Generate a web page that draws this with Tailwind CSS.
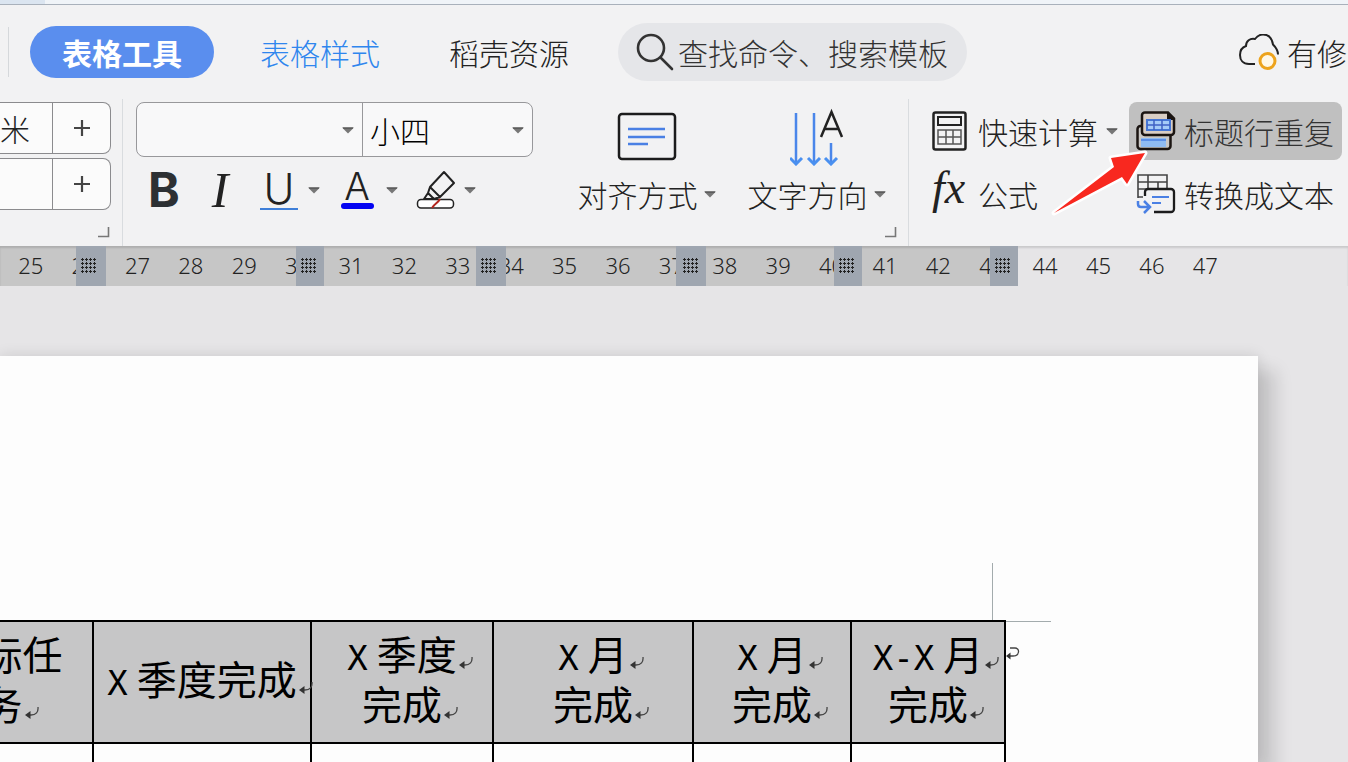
<!DOCTYPE html>
<html lang="zh-CN">
<head>
<meta charset="utf-8">
<title>表格工具</title>
<script src="https://cdn.jsdelivr.net/npm/@tailwindcss/browser@4"></script>
</head>
<body class="flex h-screen flex-col overflow-hidden bg-[#e6e5e7] font-['Noto_Sans_CJK_SC',sans-serif] font-light text-[#222]">
<svg class="hidden">
  <symbol id="caret" viewBox="0 0 12 7"><path d="M0 .5h12L6 6.5z" fill="#777"/><path d="M1 1h10" stroke="#444"/></symbol>
  <symbol id="corner" viewBox="0 0 12 12"><path d="M10.500 1v9.500H0" fill="none" stroke="#777" stroke-width="1.600"/></symbol>
  <symbol id="ret" viewBox="0 0 14 14"><path d="M13 1c.5 5-2 8-7 8H2" fill="none" stroke="#444" stroke-width="1.300"/><path d="M0 9l5.500-4v8z" fill="#333"/></symbol>
  <symbol id="dots" viewBox="0 0 16 16"><path d="M0 1.500h16M0 5.500h16M0 9.500h16M0 13.500h16" stroke="#222" stroke-width="1" stroke-dasharray="3 1"/><path d="M1.500 0v15M5.500 0v15M9.500 0v15M13.500 0v15" stroke="#222" stroke-width="1" stroke-dasharray="3 1"/></symbol>
</svg>

<div class="h-[5px] shrink-0 border-b border-[#a9b1bb] bg-[#f0f4f8]"><div class="h-full w-[45px] bg-[#dbe5f0]"></div></div>

<nav class="flex h-[94px] shrink-0 items-center bg-[#f2f2f3] text-[30px] leading-none whitespace-nowrap">
  <span class="mr-[21px] ml-2 h-[50px] w-px shrink-0 bg-[#d5d8db]"></span>
  <button class="h-[52px] w-[184px] shrink-0 rounded-full bg-[#5a8eee] font-bold text-white">表格工具</button>
  <button class="ml-[46px] shrink-0 text-[#2f86ee]">表格样式</button>
  <button class="ml-[69px] shrink-0 text-[#222]">稻壳资源</button>
  <label class="ml-[49px] flex h-[58px] w-[349px] shrink-0 items-center rounded-full bg-[#e5e6e9] pl-[18px]">
    <svg class="h-10 w-10 shrink-0" viewBox="0 0 40 40" fill="none" stroke="#333" stroke-width="2.600" stroke-linecap="round"><circle cx="15" cy="16" r="13"/><path d="M25 26l11 11"/></svg>
    <input type="text" aria-label="搜索" placeholder="查找命令、搜索模板" class="ml-0.5 w-[276px] bg-transparent outline-none placeholder:text-[#333] placeholder:opacity-100">
  </label>
  <button class="-mr-[29px] ml-auto flex shrink-0 items-center gap-2">
    <svg class="h-9 w-10" viewBox="0 0 40 36" fill="none"><path d="M16 30H10C4 30 1 26 1 21c0-5 3-8 6-9 0-5 4-8 9-7 3-4 6-4.500 8-4.500 6 0 9 4 10 10 3 3 5 6 5 10" stroke="#222" stroke-width="2"/><circle cx="28.500" cy="27" r="7.500" fill="#fff7e6" stroke="#eda31c" stroke-width="3"/></svg>
    <span>有修改</span>
  </button>
</nav>

<div class="flex h-[147px] shrink-0 bg-[#f2f2f3] text-[30px] leading-none whitespace-nowrap">
  <section class="relative flex w-[123px] shrink-0 flex-col gap-1 border-r border-[#d9dcdf] pt-[3px]">
    <div class="flex h-[52px] w-[111px] rounded-r-lg border border-l-0 border-[#8b8b8e] bg-[#fbfbfb]">
      <input aria-label="高度" value="米" class="w-[52px] min-w-0 outline-none">
      <button aria-label="增加高度" class="flex flex-1 items-center justify-center border-l border-[#8b8b8e]"><svg class="h-4 w-4" viewBox="0 0 16 16"><path d="M8 0v16M0 8h16" stroke="#444" stroke-width="2.200"/></svg></button>
    </div>
    <div class="flex h-[52px] w-[111px] rounded-r-lg border border-l-0 border-[#8b8b8e] bg-[#fbfbfb]">
      <input aria-label="宽度" class="w-[52px] min-w-0 outline-none">
      <button aria-label="增加宽度" class="flex flex-1 items-center justify-center border-l border-[#8b8b8e]"><svg class="h-4 w-4" viewBox="0 0 16 16"><path d="M8 0v16M0 8h16" stroke="#444" stroke-width="2.200"/></svg></button>
    </div>
    <svg class="absolute right-3 bottom-2 h-3 w-3"><use href="#corner"/></svg>
  </section>

  <section class="relative flex w-[786px] shrink-0 border-r border-[#d9dcdf] pt-[3px] pl-[13px]">
    <div class="w-[397px] shrink-0">
      <div class="flex h-[55px] rounded-lg border border-[#98989b] bg-[#f8f8f9]">
        <div class="relative w-[226px] border-r border-[#98989b]">
          <select aria-label="字体" class="h-full w-full appearance-none rounded-l-lg pl-2"><option></option></select>
          <svg class="pointer-events-none absolute top-6 right-2 h-[7px] w-3"><use href="#caret"/></svg>
        </div>
        <div class="relative flex-1">
          <select aria-label="字号" class="h-full w-full appearance-none rounded-r-lg pl-[7px] leading-[40px] text-black"><option>小四</option></select>
          <svg class="pointer-events-none absolute top-6 right-2 h-[7px] w-3"><use href="#caret"/></svg>
        </div>
      </div>
      <div class="flex h-[66px] items-center pl-3">
        <button aria-label="加粗" class="w-8 font-[Inter] text-[48px] leading-[52px] font-bold text-[#2d3033]">B</button>
        <button aria-label="倾斜" class="ml-[26px] w-7 font-['Liberation_Serif'] text-[50px] leading-[52px] font-normal text-[#222] italic">I</button>
        <button aria-label="下划线" class="ml-[26px] flex w-[38px] flex-col items-center border-b-2 border-[#3f7fd8] font-[Inter] text-[42px] leading-[38px] font-light">U</button>
        <svg class="ml-2.5 h-[7px] w-3"><use href="#caret"/></svg>
        <button aria-label="字体颜色" class="ml-5 flex w-[34px] flex-col items-center font-[Inter] text-[38px] leading-[31px] font-light">A<span class="mt-px h-1.5 w-[33px] rounded-full bg-[#0303f2]"></span></button>
        <svg class="ml-3 h-[7px] w-3"><use href="#caret"/></svg>
        <button aria-label="突出显示" class="ml-[18px]"><svg class="h-10 w-10" viewBox="0 0 40 40" fill="none" stroke="#222" stroke-width="2" stroke-linejoin="round"><path d="M28 2l10 11-14 14-10-10zM14 17l-2 6 6 6 6-2M12 23l-4 6h8l2-1"/><rect x="1.500" y="29.500" width="36" height="8.500" rx="3.500" fill="#fff" stroke-width="1.500"/><path d="M24 29c-2 4-6 5-8 9" stroke="#b3261e"/></svg></button>
        <svg class="ml-2 h-[7px] w-3"><use href="#caret"/></svg>
      </div>
    </div>
    <button class="ml-[44px] flex w-[139px] shrink-0 flex-col items-center pt-[10px]">
      <svg class="h-[50px] w-[60px]" viewBox="0 0 60 50" fill="none"><rect x="2" y="2" width="56" height="45" rx="3" stroke="#1c1c1c" stroke-width="2.500"/><path d="M11 17h37M11 25h37M11 32h20" stroke="#4a80e4" stroke-width="2.500"/></svg>
      <span class="mt-[17px] flex items-center gap-[6px]">对齐方式<svg class="h-[7px] w-3"><use href="#caret"/></svg></span>
    </button>
    <button class="ml-[31px] flex w-[139px] shrink-0 flex-col items-center pt-[6px]">
      <svg class="h-[58px] w-[54px]" viewBox="0 0 54 58" fill="none"><path d="M6 5v50M24 5v50M41 35v20" stroke="#4a86ea" stroke-width="2.500"/><path d="M0 50l6 6 6-6M18 50l6 6 6-6M35 50l6 6 6-6" stroke="#4a90f0" stroke-width="3"/><path d="M31 29L41.500 4 52 29M34 21h15" stroke="#222" stroke-width="2.500"/></svg>
      <span class="mt-[13px] flex items-center gap-[6px]">文字方向<svg class="h-[7px] w-3"><use href="#caret"/></svg></span>
    </button>
    <svg class="absolute right-[11px] bottom-2 h-3 w-3"><use href="#corner"/></svg>
  </section>

  <section class="relative flex min-w-[439px] flex-1 pt-[3px]">
    <div class="flex w-[220px] shrink-0 flex-col gap-1 pl-[23px]">
      <button class="flex h-[58px] items-center"><svg class="h-10 w-9" viewBox="0 0 36 40" fill="none"><rect x="1.500" y="1.500" width="32" height="37" rx="2" stroke="#222" stroke-width="2.500"/><rect x="6" y="6" width="23" height="8" stroke="#222" stroke-width="2"/><path d="M6 19h23v14H6zM6 26h23M14 19v14M21 19v14" stroke="#555" stroke-width="1.500"/></svg><span class="ml-[10px]">快速计算</span><svg class="ml-2 h-[7px] w-3"><use href="#caret"/></svg></button>
      <button class="flex h-[60px] items-center"><span class="w-9 pb-3 text-left font-['Liberation_Serif'] text-[46px] leading-[42px] font-normal italic">fx</span><span class="ml-[10px]">公式</span></button>
    </div>
    <div class="flex w-[213px] shrink-0 flex-col gap-1">
      <button class="flex h-[58px] items-center rounded-lg bg-[#c0c0c0] pl-[7px] text-[#333]"><svg class="h-10 w-10" viewBox="0 0 40 40" fill="none"><rect x="1.500" y="15" width="33" height="23" rx="3" fill="#c9c7c5" stroke="#1b1512" stroke-width="2.500"/><rect x="5" y="27" width="25" height="9" fill="#8fbcf3"/><path d="M5 29h25" stroke="#4a80e4" stroke-width="1.500"/><path d="M9 1.500h23l6 6V21a3 3 0 0 1-3 3H9a3 3 0 0 1-3-3V4a3 3 0 0 1 3-2.500z" fill="#d8cdc4" stroke="#1b1512" stroke-width="2.500"/><path d="M31 1l8 8h-8z" fill="#1b1512"/><path d="M11 9h23v10H11z" fill="#a5cbf8" stroke="#4676d5" stroke-width="2"/><path d="M11 14h23M18 9v10M26 9v10" stroke="#3f62c4" stroke-width="1.500"/></svg><span class="ml-2">标题行重复</span></button>
      <button class="flex h-[60px] items-center pl-[7px]"><svg class="h-[42px] w-10" viewBox="0 0 40 42" fill="none"><path d="M2 25V2h29v13M2 9h29M2 16h8M12 2v14M22 9v6M2 24h5" stroke="#444" stroke-width="1.600"/><path d="M9 23v-4a3 3 0 0 1 3-3h23a3 3 0 0 1 3 3v17a3 3 0 0 1-3 3H18" stroke="#1c1c1c" stroke-width="2.300"/><path d="M16 24h17M16 30h9" stroke="#4a80e4" stroke-width="2"/><path d="M2 28v3c0 2 1 3 3 3h8M8 28l6 6-6 6" stroke="#4a80e4" stroke-width="2.500"/></svg><span class="ml-2">转换成文本</span></button>
    </div>
    <svg class="pointer-events-none absolute top-[48px] left-[141px] h-[72px] w-[102px]" viewBox="0 0 102 72"><path d="M4 66L64 20l-3-9 34-5-18 31-5-7z" fill="#f8281f" stroke="#fff" stroke-width="5" stroke-linejoin="round" paint-order="stroke"/></svg>
  </section>
</div>

<div class="relative h-10 shrink-0 shadow-[inset_0_2px_2px_rgba(0,0,0,0.12)]">
  <div class="absolute inset-y-0 left-0 -z-10 w-[1018px] bg-[#c6c6c6]"></div>
  <div class="ml-1 grid w-[1228px] grid-cols-[repeat(23,1fr)] text-center font-['Noto_Sans'] text-[22px] leading-[38px] font-light text-[#222]">
    <span>25</span><span>26</span><span>27</span><span>28</span><span>29</span><span>30</span><span>31</span><span>32</span><span>33</span><span>34</span><span>35</span><span>36</span><span>37</span><span>38</span><span>39</span><span>40</span><span>41</span><span>42</span><span>43</span><span>44</span><span>45</span><span>46</span><span>47</span>
  </div>
  <div class="absolute inset-y-0 left-[76px] flex w-[30px] items-center bg-[#9fa6b0] pl-[5px]"><svg class="h-4 w-4"><use href="#dots"/></svg></div>
  <div class="absolute inset-y-0 left-[296px] flex w-7 items-center bg-[#9fa6b0] pl-[5px]"><svg class="h-4 w-4"><use href="#dots"/></svg></div>
  <div class="absolute inset-y-0 left-[476px] flex w-[30px] items-center bg-[#9fa6b0] pl-[5px]"><svg class="h-4 w-4"><use href="#dots"/></svg></div>
  <div class="absolute inset-y-0 left-[676px] flex w-[30px] items-center bg-[#9fa6b0] pl-[7px]"><svg class="h-4 w-4"><use href="#dots"/></svg></div>
  <div class="absolute inset-y-0 left-[834px] flex w-7 items-center bg-[#9fa6b0] pl-[5px]"><svg class="h-4 w-4"><use href="#dots"/></svg></div>
  <div class="absolute inset-y-0 left-[990px] flex w-7 items-center bg-[#9fa6b0] pl-[5px]"><svg class="h-4 w-4"><use href="#dots"/></svg></div>
</div>

<main class="flex flex-1 overflow-hidden pt-[70px] pr-[90px]">
  <div class="relative flex-1 bg-[#fdfdfd] pt-[264px] shadow-[0_0_14px_rgba(0,0,0,0.12),18px_14px_16px_rgba(0,0,0,0.13)]">
    <span class="absolute top-[207px] left-[992px] h-[57px] w-px bg-[#a3abad]"></span>
    <span class="absolute top-[265px] left-[1006px] h-px w-[45px] bg-[#a3abad]"></span>
    <svg class="absolute top-[290px] left-[1006px] h-[18px] w-3.5" viewBox="0 0 14 18" fill="none"><path d="M4 2h5c5 0 5 8-2 8H3" stroke="#444" stroke-width="1.300"/><path d="M0 10l4.500-3.500v7z" fill="#333"/></svg>
    <div class="overflow-hidden">
    <table class="-ml-[89px] w-[1093px] table-fixed border-collapse text-[40px] leading-[50px] text-black">
      <colgroup><col class="w-[181px]"><col class="w-[218px]"><col class="w-[182px]"><col class="w-[200px]"><col class="w-[158px]"><col class="w-[154px]"></colgroup>
      <thead>
        <tr class="h-[122px] bg-[#c6c6c7]">
          <th class="border-2 border-black p-0 pb-2 font-normal whitespace-nowrap">目标任<br>务<span class="relative inline-block w-0"><svg class="absolute bottom-0 left-0.5 h-3.5 w-3.5"><use href="#ret"/></svg></span></th>
          <th class="border-2 border-black p-0 pb-2 font-normal whitespace-nowrap"><span class="font-['DejaVu_Sans_Mono'] text-[34px] leading-none">X</span> 季度完成<span class="relative inline-block w-0"><svg class="absolute bottom-0 left-0.5 h-3.5 w-3.5"><use href="#ret"/></svg></span></th>
          <th class="border-2 border-black p-0 pb-2 font-normal whitespace-nowrap"><span class="font-['DejaVu_Sans_Mono'] text-[34px] leading-none">X</span> 季度<span class="relative inline-block w-0"><svg class="absolute bottom-0 left-0.5 h-3.5 w-3.5"><use href="#ret"/></svg></span><br>完成<span class="relative inline-block w-0"><svg class="absolute bottom-0 left-0.5 h-3.5 w-3.5"><use href="#ret"/></svg></span></th>
          <th class="border-2 border-black p-0 pb-2 font-normal whitespace-nowrap"><span class="font-['DejaVu_Sans_Mono'] text-[34px] leading-none">X</span> 月<span class="relative inline-block w-0"><svg class="absolute bottom-0 left-0.5 h-3.5 w-3.5"><use href="#ret"/></svg></span><br>完成<span class="relative inline-block w-0"><svg class="absolute bottom-0 left-0.5 h-3.5 w-3.5"><use href="#ret"/></svg></span></th>
          <th class="border-2 border-black p-0 pb-2 font-normal whitespace-nowrap"><span class="font-['DejaVu_Sans_Mono'] text-[34px] leading-none">X</span> 月<span class="relative inline-block w-0"><svg class="absolute bottom-0 left-0.5 h-3.5 w-3.5"><use href="#ret"/></svg></span><br>完成<span class="relative inline-block w-0"><svg class="absolute bottom-0 left-0.5 h-3.5 w-3.5"><use href="#ret"/></svg></span></th>
          <th class="border-2 border-black p-0 pb-2 font-normal whitespace-nowrap"><span class="font-['DejaVu_Sans_Mono'] text-[34px] leading-none">X-X</span> 月<span class="relative inline-block w-0"><svg class="absolute bottom-0 left-0.5 h-3.5 w-3.5"><use href="#ret"/></svg></span><br>完成<span class="relative inline-block w-0"><svg class="absolute bottom-0 left-0.5 h-3.5 w-3.5"><use href="#ret"/></svg></span></th>
        </tr>
      </thead>
      <tbody>
        <tr class="h-[122px]"><td class="border-2 border-black"></td><td class="border-2 border-black"></td><td class="border-2 border-black"></td><td class="border-2 border-black"></td><td class="border-2 border-black"></td><td class="border-2 border-black"></td></tr>
      </tbody>
    </table>
    </div>
  </div>
</main>
</body>
</html>
